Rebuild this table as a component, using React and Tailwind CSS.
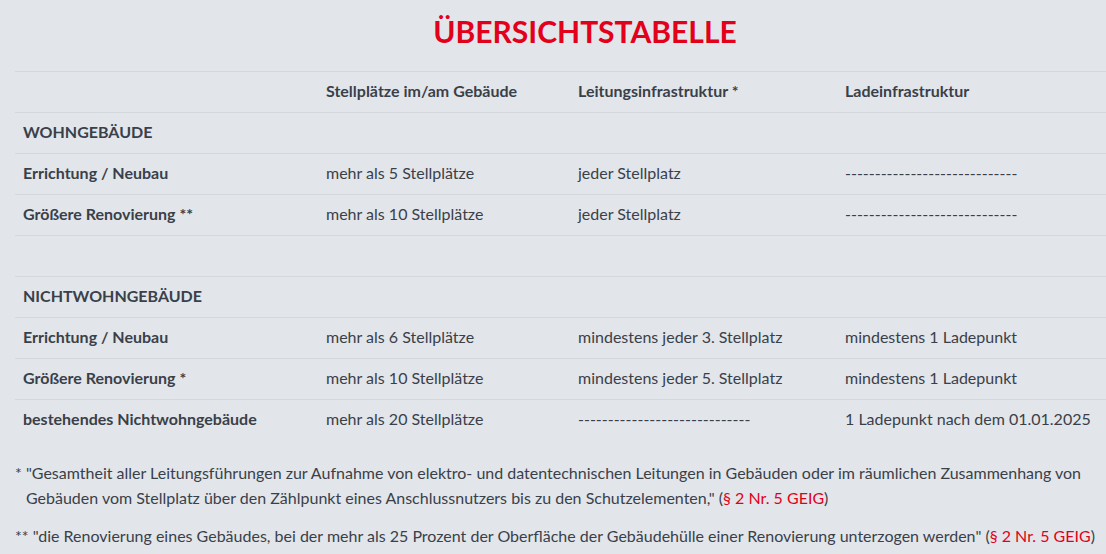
import React from 'react';

const COLS = ['w-[303px]', 'w-[252px]', 'w-[267px]', 'flex-1'];

const sections = [
  {
    title: 'WOHNGEBÄUDE',
    rows: [
      ['Errichtung / Neubau', 'mehr als 5 Stellplätze', 'jeder Stellplatz', '-----------------------------'],
      ['Größere Renovierung **', 'mehr als 10 Stellplätze', 'jeder Stellplatz', '-----------------------------'],
    ],
  },
  {
    title: 'NICHTWOHNGEBÄUDE',
    rows: [
      ['Errichtung / Neubau', 'mehr als 6 Stellplätze', 'mindestens jeder 3. Stellplatz', 'mindestens 1 Ladepunkt'],
      ['Größere Renovierung *', 'mehr als 10 Stellplätze', 'mindestens jeder 5. Stellplatz', 'mindestens 1 Ladepunkt'],
      ['bestehendes Nichtwohngebäude', 'mehr als 20 Stellplätze', '-----------------------------', '1 Ladepunkt nach dem 01.01.2025'],
    ],
  },
];

const Row = ({ cells, bold }) => (
  <div className="flex h-[41px] items-center pb-[2px] border-t border-[#d3d8dc]">
    {cells.map((c, i) => (
      <div key={i} className={`${COLS[i]} px-2 ${bold || i === 0 ? 'font-bold' : ''}`}>
        {c}
      </div>
    ))}
  </div>
);

const App = () => {
  return (
    <div
      className="w-[1106px] h-[554px] overflow-hidden bg-[#e2e6ea] text-[#3a4049] text-[16px] leading-5"
      style={{ fontFamily: 'Lato, "Liberation Sans", sans-serif' }}
    >
      <div className="ml-[15px] w-[1140px] pt-[13px]">
        <h1 className="text-center text-[30px] leading-[36px] font-bold text-[#e2001a]">
          ÜBERSICHTSTABELLE
        </h1>

        {/* Table */}
        <div className="mt-[22px]">
          <Row cells={['', 'Stellplätze im/am Gebäude', 'Leitungsinfrastruktur *', 'Ladeinfrastruktur']} bold />
          {sections.map((s, si) => (
            <React.Fragment key={s.title}>
              {si > 0 && <div className="h-[41px] border-t border-[#d3d8dc]" />}
              <div className="flex h-[41px] items-center pb-[2px] border-t border-[#d3d8dc] px-2 font-bold">{s.title}</div>
              {s.rows.map((r, ri) => (
                <Row key={ri} cells={r} />
              ))}
            </React.Fragment>
          ))}
        </div>
      </div>

      {/* Footnotes */}
      <div className="ml-[15px] w-[1091px] mt-[20px] leading-[25px]">
        <p className="pl-[11px] -indent-[11px]">
          * "Gesamtheit aller Leitungsführungen zur Aufnahme von elektro- und datentechnischen Leitungen in Gebäuden oder im räumlichen Zusammenhang von Gebäuden vom Stellplatz über den Zählpunkt eines Anschlussnutzers bis zu den Schutzelementen," (<span className="text-[#e2001a]">§ 2 Nr. 5 GEIG</span>)
        </p>
        <p className="mt-[13px]">
          ** "die Renovierung eines Gebäudes, bei der mehr als 25 Prozent der Oberfläche der Gebäudehülle einer Renovierung unterzogen werden" (<span className="text-[#e2001a]">§ 2 Nr. 5 GEIG</span>)
        </p>
      </div>
    </div>
  );
};

export default App;
